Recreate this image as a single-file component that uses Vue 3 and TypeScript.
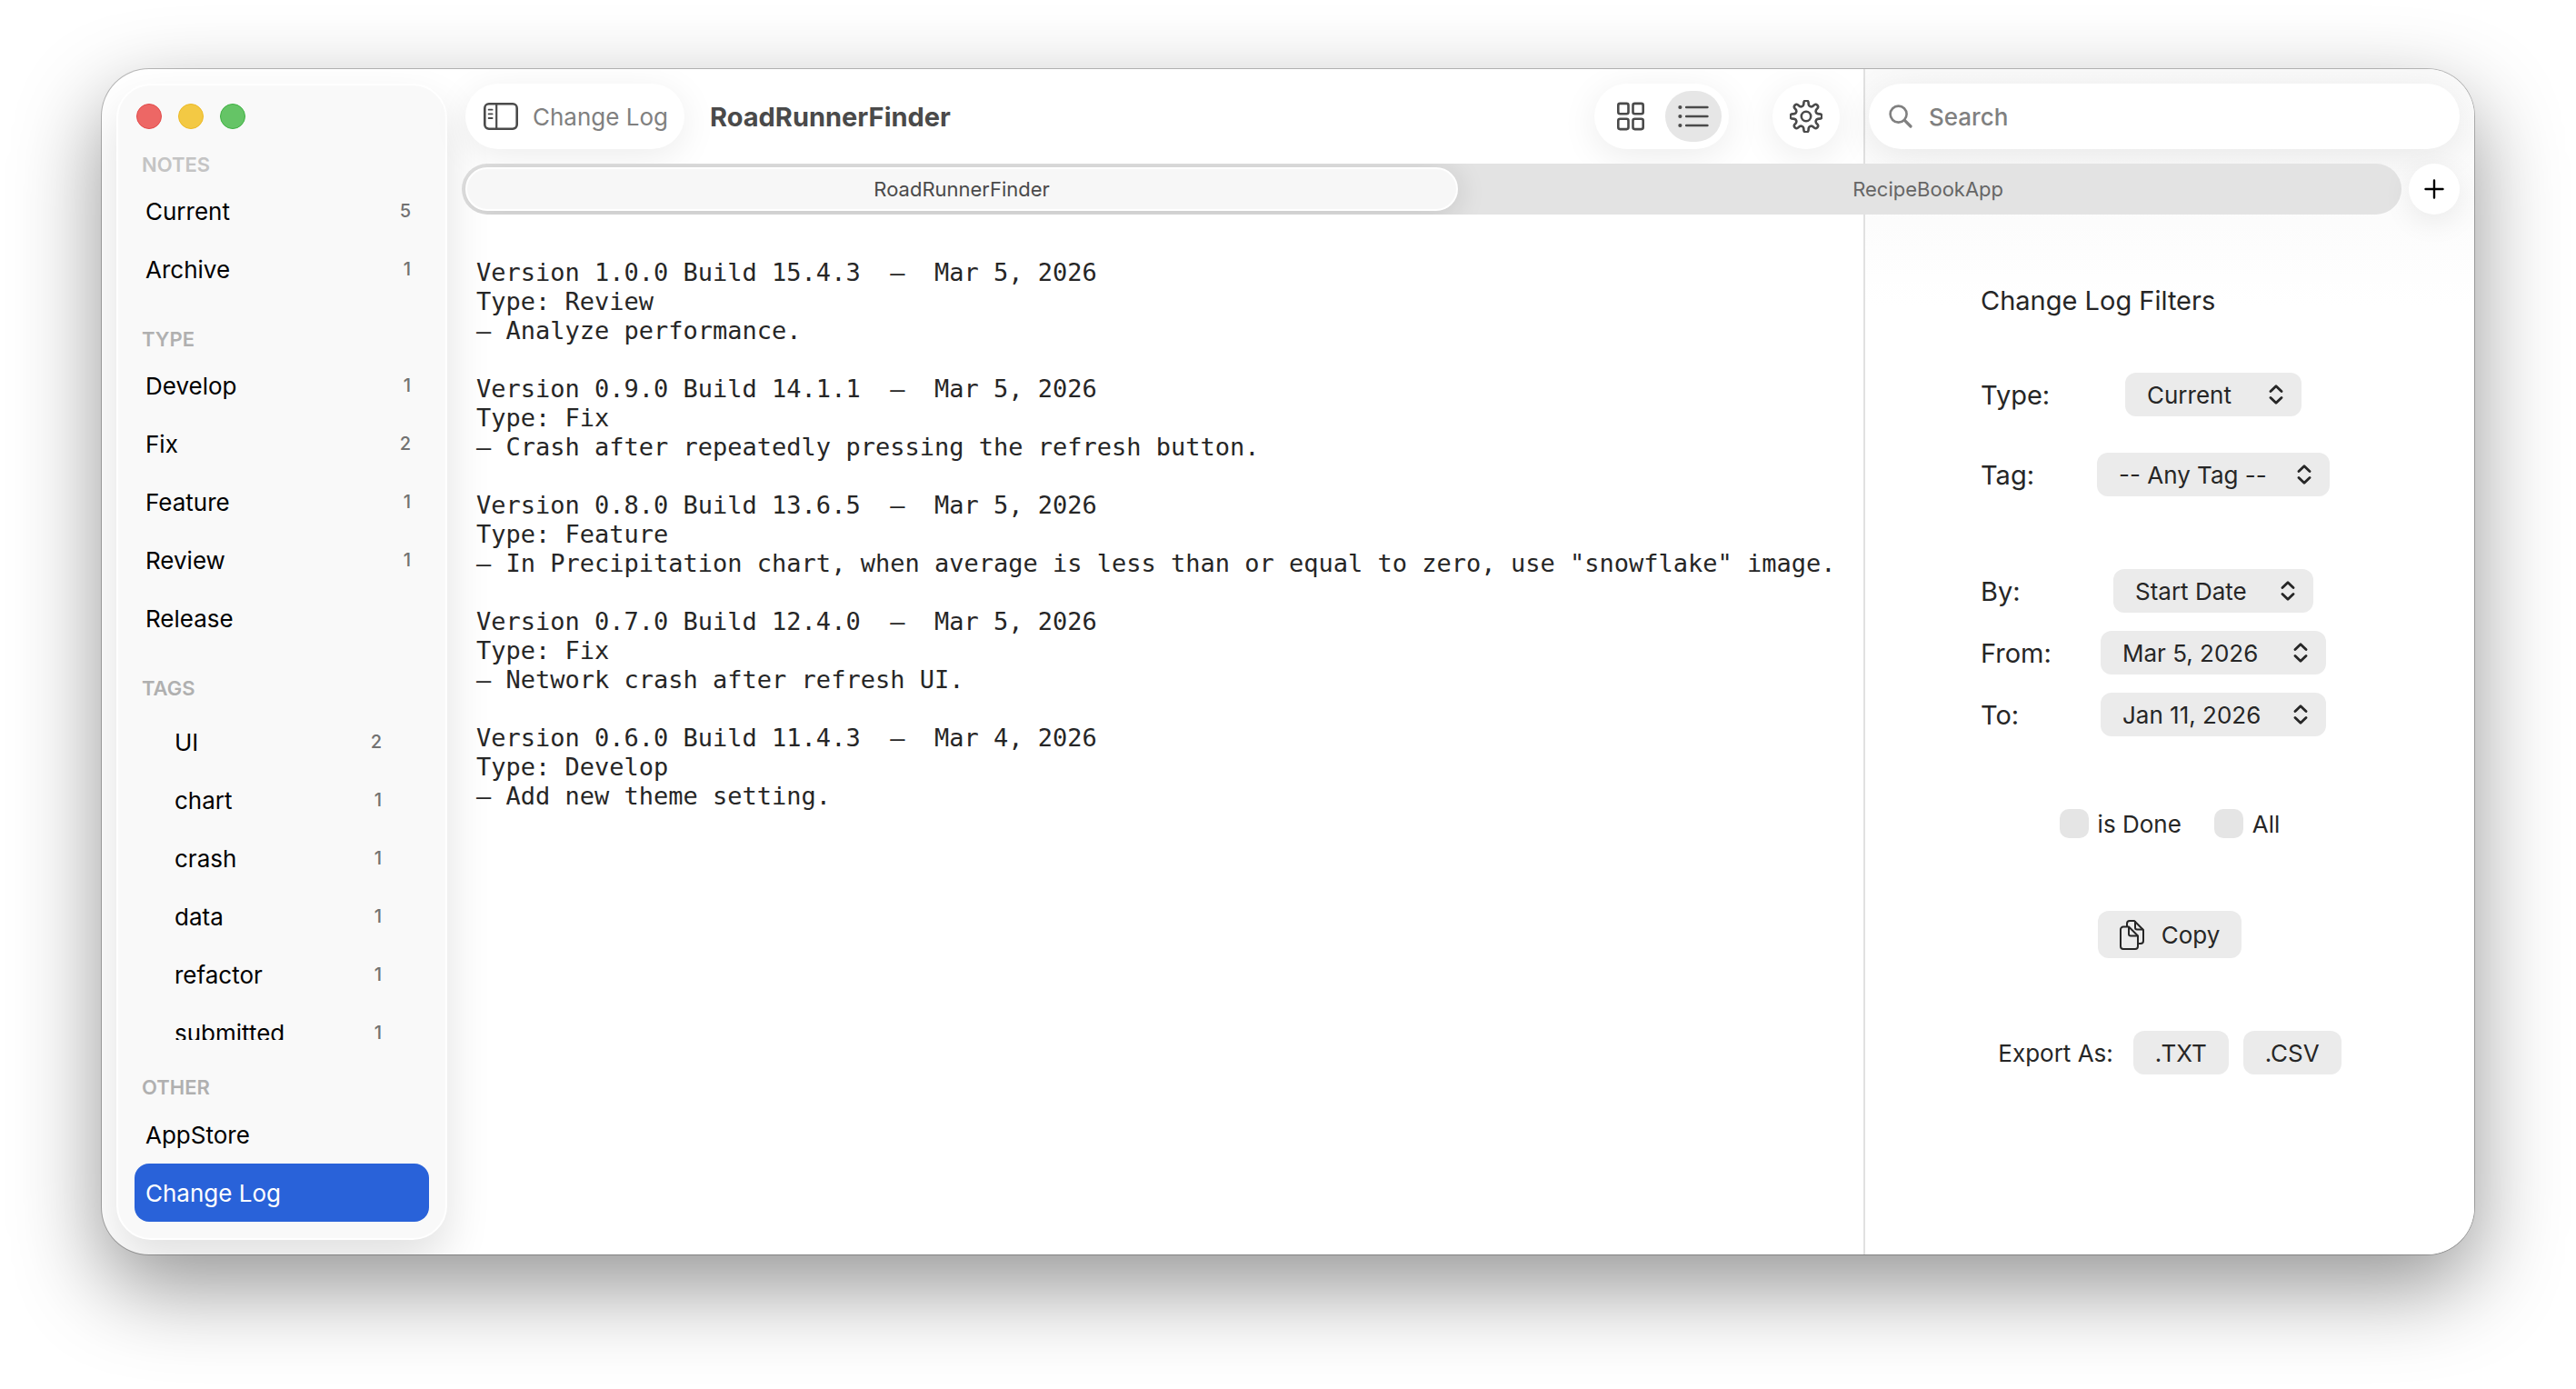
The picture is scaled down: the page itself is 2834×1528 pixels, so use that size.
<script setup lang="ts">
import { ref } from 'vue'

interface NavItem {
  label: string
  count?: number
}

interface LogEntry {
  version: string
  build: string
  date: string
  type: string
  note: string
}

interface Filter {
  id: string
  label: string
  size: string
  options: string[]
}

const notes: NavItem[] = [
  { label: 'Current', count: 5 },
  { label: 'Archive', count: 1 },
]
const types: NavItem[] = [
  { label: 'Develop', count: 1 },
  { label: 'Fix', count: 2 },
  { label: 'Feature', count: 1 },
  { label: 'Review', count: 1 },
  { label: 'Release' },
]
const tags: NavItem[] = [
  { label: 'UI', count: 2 },
  { label: 'chart', count: 1 },
  { label: 'crash', count: 1 },
  { label: 'data', count: 1 },
  { label: 'refactor', count: 1 },
  { label: 'submitted', count: 1 },
]
const others: NavItem[] = [{ label: 'AppStore' }, { label: 'Change Log' }]
const selected = ref('Change Log')

const projects = ['RoadRunnerFinder', 'RecipeBookApp']
const project = ref(projects[0])

const entries: LogEntry[] = [
  { version: '1.0.0', build: '15.4.3', date: 'Mar 5, 2026', type: 'Review', note: 'Analyze performance.' },
  { version: '0.9.0', build: '14.1.1', date: 'Mar 5, 2026', type: 'Fix', note: 'Crash after repeatedly pressing the refresh button.' },
  { version: '0.8.0', build: '13.6.5', date: 'Mar 5, 2026', type: 'Feature', note: 'In Precipitation chart, when average is less than or equal to zero, use "snowflake" image.' },
  { version: '0.7.0', build: '12.4.0', date: 'Mar 5, 2026', type: 'Fix', note: 'Network crash after refresh UI.' },
  { version: '0.6.0', build: '11.4.3', date: 'Mar 4, 2026', type: 'Develop', note: 'Add new theme setting.' },
]

const scope: Filter[] = [
  { id: 'type', label: 'Type:', size: 'small', options: ['Current'] },
  { id: 'tag', label: 'Tag:', size: 'large', options: ['-- Any Tag --'] },
]
const range: Filter[] = [
  { id: 'by', label: 'By:', size: 'medium', options: ['Start Date'] },
  { id: 'from', label: 'From:', size: 'date', options: ['Mar 5, 2026'] },
  { id: 'to', label: 'To:', size: 'date', options: ['Jan 11, 2026'] },
]

// Gear outline: eight rounded teeth around a 36-unit box.
function gearPath(): string {
  const c = 18
  const pts: [number, number][] = []
  for (let i = 0; i < 8; i++) {
    const a = i * 45
    for (const [d, r] of [[-12, 12], [-9, 17.6], [9, 17.6], [12, 12]]) {
      const t = ((a + d - 90) * Math.PI) / 180
      pts.push([c + r * Math.cos(t), c + r * Math.sin(t)])
    }
  }
  const n = pts.length
  const mid = (a: [number, number], b: [number, number]) =>
    `${((a[0] + b[0]) / 2).toFixed(2)} ${((a[1] + b[1]) / 2).toFixed(2)}`
  let d = `M${mid(pts[n - 1], pts[0])}`
  for (let i = 0; i < n; i++) {
    const p = pts[i]
    d += `Q${p[0].toFixed(2)} ${p[1].toFixed(2)} ${mid(p, pts[(i + 1) % n])}`
  }
  return d + 'Z'
}
const gear = gearPath()
</script>

<template>
  <div class="stage">
    <div class="window">
      <aside class="sidebar">
        <div class="lights">
          <button class="light red" type="button" aria-label="Close"></button>
          <button class="light yellow" type="button" aria-label="Minimize"></button>
          <button class="light green" type="button" aria-label="Zoom"></button>
        </div>
        <nav>
          <h2 class="first">NOTES</h2>
          <button v-for="n in notes" :key="n.label" class="row" type="button" @click="selected = n.label">
            <span>{{ n.label }}</span><span class="count">{{ n.count }}</span>
          </button>
          <h2>TYPE</h2>
          <button v-for="n in types" :key="n.label" class="row" type="button" @click="selected = n.label">
            <span>{{ n.label }}</span><span class="count">{{ n.count }}</span>
          </button>
          <h2 class="spaced">TAGS</h2>
          <div class="tags">
            <button v-for="n in tags" :key="n.label" class="row" type="button" @click="selected = n.label">
              <span>{{ n.label }}</span><span class="count">{{ n.count }}</span>
            </button>
          </div>
          <h2 class="other">OTHER</h2>
          <button
            v-for="n in others"
            :key="n.label"
            class="row"
            :class="{ active: selected === n.label }"
            type="button"
            @click="selected = n.label"
          >
            <span>{{ n.label }}</span>
          </button>
        </nav>
      </aside>

      <main class="main">
        <div class="panel-back"></div>

        <header class="toolbar">
          <button class="pill crumb" type="button">
            <svg width="38" height="30" viewBox="0 0 38 30" fill="none" stroke="#4a4a4a" stroke-width="2.6" stroke-linecap="round">
              <rect x="1.3" y="1.3" width="35.4" height="27.4" rx="4.6" />
              <path d="M14.2 1.5V28.5" stroke-width="2.2" />
              <path d="M5.6 7.7h4M5.6 12.4h4M5.6 17h4" stroke-width="1.8" />
            </svg>
            <span>Change Log</span>
          </button>
          <h1>RoadRunnerFinder</h1>
          <div class="pill views">
            <button type="button" aria-label="Grid view">
              <svg width="32" height="32" viewBox="0 0 32 32" fill="none" stroke="#4a4a4a" stroke-width="2.6">
                <rect x="2.3" y="1.9" width="11.2" height="11.4" rx="2" />
                <rect x="18.5" y="1.9" width="11.2" height="11.4" rx="2" />
                <rect x="2.3" y="18.7" width="11.2" height="11.4" rx="2" />
                <rect x="18.5" y="18.7" width="11.2" height="11.4" rx="2" />
              </svg>
            </button>
            <button class="on" type="button" aria-label="List view">
              <svg width="36" height="28" viewBox="0 0 36 28" fill="none" stroke="#4a4a4a" stroke-width="2.6" stroke-linecap="round">
                <path d="M10.2 4H33.4M10.2 14H33.4M10.2 24H33.4" />
                <g fill="#4a4a4a" stroke="none">
                  <circle cx="3.4" cy="4" r="2.1" />
                  <circle cx="3.4" cy="14" r="2.1" />
                  <circle cx="3.4" cy="24" r="2.1" />
                </g>
              </svg>
            </button>
          </div>
          <button class="pill settings" type="button" aria-label="Settings">
            <svg width="36" height="36" viewBox="0 0 36 36" fill="none" stroke="#4a4a4a" stroke-width="2.6" stroke-linejoin="round">
              <path :d="gear" />
              <circle cx="18" cy="18" r="5.2" />
            </svg>
          </button>
        </header>

        <label class="pill search">
          <svg width="26" height="26" viewBox="0 0 26 26" fill="none" stroke="#808080" stroke-width="2.6" stroke-linecap="round">
            <circle cx="10.6" cy="10.6" r="9" />
            <path d="M17.4 17.4L24 24" stroke-width="3.2" />
          </svg>
          <input type="text" placeholder="Search" aria-label="Search" />
        </label>

        <div class="tabbar">
          <div class="tabs">
            <button
              v-for="p in projects"
              :key="p"
              class="tab"
              :class="{ current: p === project }"
              type="button"
              @click="project = p"
            >
              {{ p }}
            </button>
          </div>
          <button class="add" type="button" aria-label="New tab">
            <svg width="22" height="22" viewBox="0 0 22 22" stroke="#000" stroke-width="2.4" stroke-linecap="round">
              <path d="M11 1.5V20.5M1.5 11H20.5" />
            </svg>
          </button>
        </div>

        <section class="log">
          <article v-for="e in entries" :key="e.version">
            <p>Version {{ e.version }} Build {{ e.build }}{{ '  –  ' }}{{ e.date }}</p>
            <p>Type: {{ e.type }}</p>
            <p>– {{ e.note }}</p>
          </article>
        </section>

        <form class="filters" @submit.prevent>
          <h2>Change Log Filters</h2>
          <div class="fields scope">
            <div v-for="f in scope" :key="f.id" class="field">
              <label :for="f.id">{{ f.label }}</label>
              <div class="picker" :class="f.size">
                <select :id="f.id">
                  <option v-for="o in f.options" :key="o">{{ o }}</option>
                </select>
                <svg class="arrows" width="16" height="22" viewBox="0 0 16 22" fill="none" stroke="#262626" stroke-width="2.8" stroke-linecap="round" stroke-linejoin="round">
                  <path d="M2 7.6L8 1.8L14 7.6M2 14.4L8 20.2L14 14.4" />
                </svg>
              </div>
            </div>
          </div>
          <div class="fields range">
            <div v-for="f in range" :key="f.id" class="field">
              <label :for="f.id">{{ f.label }}</label>
              <div class="picker" :class="f.size">
                <select :id="f.id">
                  <option v-for="o in f.options" :key="o">{{ o }}</option>
                </select>
                <svg class="arrows" width="16" height="22" viewBox="0 0 16 22" fill="none" stroke="#262626" stroke-width="2.8" stroke-linecap="round" stroke-linejoin="round">
                  <path d="M2 7.6L8 1.8L14 7.6M2 14.4L8 20.2L14 14.4" />
                </svg>
              </div>
            </div>
          </div>
          <div class="checks">
            <label><input type="checkbox" />is Done</label>
            <label><input type="checkbox" />All</label>
          </div>
          <button class="btn copy" type="button">
            <svg width="28" height="34" viewBox="0 0 28 34" fill="none" stroke="#262626" stroke-width="2" stroke-linejoin="round">
              <path d="M8 8V5a3 3 0 0 1 3-3h5L26 12V24a3 3 0 0 1-3 3H20.500" />
              <path d="M17 2V9.500a2 2 0 0 0 2 2H26" />
              <path d="M4 8.500H10L20 18.500V30a3 3 0 0 1-3 3H4a3 3 0 0 1-3-3V11.500a3 3 0 0 1 3-3Z" />
              <path d="M10 8.500V16.500a2 2 0 0 0 2 2H20" />
            </svg>
            <span>Copy</span>
          </button>
          <div class="export">
            <span>Export As:</span>
            <button class="btn" type="button">.TXT</button>
            <button class="btn" type="button">.CSV</button>
          </div>
        </form>
      </main>
    </div>
  </div>
</template>

<style>
html,
body {
  margin: 0;
  background: #fff;
}
</style>

<style scoped>
.stage {
  box-sizing: border-box;
  min-height: 100vh;
  padding: 76px 112px 148px;
  display: flex;
  font-family: Inter, 'Liberation Sans', sans-serif;
  font-size: 26px;
  color: #262626;
}
button,
input,
select {
  font: inherit;
  color: inherit;
  margin: 0;
  padding: 0;
  border: 0;
  background: none;
  outline: none;
}
h1,
h2,
p {
  margin: 0;
}
svg {
  display: block;
  flex: none;
}
.window {
  flex: 1;
  min-width: 0;
  display: flex;
  overflow: hidden;
  border-radius: 52px;
  background: #fff;
  box-shadow:
    0 0 0 1px rgba(0, 0, 0, 0.24),
    0 36px 96px rgba(0, 0, 0, 0.42);
}

/* Sidebar */
.sidebar {
  box-sizing: border-box;
  flex: none;
  width: 364px;
  margin: 16px;
  padding: 20px 18px 18px;
  border: 2px solid #fff;
  border-radius: 38px;
  background: #f9f9f9;
  box-shadow: 0 24px 50px rgba(0, 0, 0, 0.12);
  color: #000;
}
.lights {
  display: flex;
  gap: 18px;
  padding-left: 2px;
}
.light {
  width: 28px;
  height: 28px;
  border-radius: 50%;
}
.red {
  background: #ed6765;
  border: 1px solid #e24b4a;
}
.yellow {
  background: #f3c944;
  border: 1px solid #ecb926;
}
.green {
  background: #65c466;
  border: 1px solid #3fb143;
}
.sidebar h2 {
  box-sizing: border-box;
  height: 64px;
  padding: 32px 0 0 8px;
  font-size: 22px;
  line-height: 26px;
  font-weight: 600;
  color: #b0b0b0;
}
.sidebar h2.first {
  height: 58px;
  padding-top: 26px;
  color: #c4c4c4;
}
.sidebar h2.spaced {
  height: 72px;
}
.sidebar h2.other {
  height: 72px;
  padding-top: 39px;
}
.row {
  display: flex;
  align-items: center;
  justify-content: space-between;
  width: 100%;
  height: 64px;
  padding: 0 20px 0 12px;
  border-radius: 16px;
  text-align: left;
}
.row.active {
  background: #2962d9;
  color: #fff;
}
.count {
  font-size: 20px;
  font-weight: 500;
  color: #727272;
}
.tags {
  height: 360px;
  overflow: hidden;
  padding: 0 32px;
}

/* Main area */
.main {
  flex: 1;
  min-width: 0;
  display: grid;
  grid-template-columns: 1fr 672px;
  grid-template-rows: 104px 56px 1fr;
}
.panel-back {
  grid-area: 1 / 2 / 4 / 3;
  border-left: 2px solid #e1e1e1;
  background: linear-gradient(#fafafa, #fcfcfc 170px, #fff 260px);
}
.toolbar {
  grid-area: 1 / 1 / 2 / 2;
  display: flex;
  align-items: center;
  padding: 0 26px 0 4px;
}
.pill {
  box-sizing: border-box;
  height: 72px;
  border-radius: 36px;
  background: #fff;
  box-shadow: 0 8px 40px rgba(0, 0, 0, 0.08);
}
.crumb {
  display: flex;
  align-items: center;
  gap: 16px;
  padding: 0 18px 0 20px;
  color: #808080;
}
.toolbar h1 {
  flex: 1;
  padding-left: 28px;
  font-size: 29px;
  font-weight: 700;
  color: #4a4a4a;
}
.views {
  display: flex;
  align-items: center;
  gap: 6px;
  padding: 0 8px;
}
.views button {
  display: flex;
  align-items: center;
  justify-content: center;
  width: 64px;
  height: 56px;
  border-radius: 28px;
}
.views .on {
  width: 62px;
  background: #e6e6e6;
}
.settings {
  display: flex;
  align-items: center;
  justify-content: center;
  width: 74px;
  margin-left: 48px;
}
.search {
  grid-area: 1 / 2 / 2 / 3;
  align-self: center;
  display: flex;
  align-items: center;
  gap: 18px;
  margin: 0 16px 0 6px;
  padding: 0 22px;
}
.search input {
  flex: 1;
  min-width: 0;
}
.search input::placeholder {
  color: #808080;
  font-weight: 500;
  opacity: 1;
}
.tabbar {
  grid-area: 2 / 1 / 3 / 3;
  display: flex;
  gap: 8px;
  padding-right: 16px;
}
.tabs {
  box-sizing: border-box;
  flex: 1;
  display: flex;
  padding: 4px;
  overflow: hidden;
  border-radius: 28px;
  background: #e3e3e3;
}
.tab {
  flex: 19;
  font-size: 22px;
  color: #666;
}
.tab.current {
  box-sizing: border-box;
  flex: 20;
  border: 2px solid #fff;
  border-radius: 24px;
  background: #f7f7f7;
  color: #4a4a4a;
  box-shadow: 0 4px 32px rgba(0, 0, 0, 0.14);
}
.add {
  display: flex;
  align-items: center;
  justify-content: center;
  width: 56px;
  height: 56px;
  border-radius: 50%;
  background: #fff;
  box-shadow: 0 8px 32px rgba(0, 0, 0, 0.08);
}

/* Change log text */
.log {
  grid-area: 3 / 1 / 4 / 2;
  display: flex;
  flex-direction: column;
  gap: 32px;
  padding: 48px 16px 0;
  font-family: 'DejaVu Sans Mono', 'Liberation Mono', monospace;
  font-size: 27px;
  line-height: 32px;
}
.log p {
  white-space: pre-wrap;
}

/* Filters */
.filters {
  grid-area: 3 / 2 / 4 / 3;
  display: flex;
  flex-direction: column;
  align-items: center;
  padding: 76px 0 0 2px;
}
.filters h2,
.fields {
  width: 416px;
}
.filters h2 {
  font-size: 29px;
  line-height: 38px;
  font-weight: 400;
}
.fields {
  display: flex;
  flex-direction: column;
}
.scope {
  gap: 40px;
  margin-top: 60px;
}
.range {
  gap: 20px;
  margin-top: 80px;
}
.field {
  display: grid;
  grid-template-columns: 96px 1fr;
  align-items: center;
}
.field label {
  font-size: 29px;
}
.picker {
  justify-self: center;
  display: grid;
  align-items: center;
}
.picker select {
  grid-area: 1 / 1 / 2 / 2;
  box-sizing: border-box;
  width: 100%;
  height: 48px;
  padding: 0 48px 0 24px;
  border-radius: 12px;
  background: #ebebeb;
  appearance: none;
}
.arrows {
  grid-area: 1 / 1 / 2 / 2;
  justify-self: end;
  margin-right: 20px;
  pointer-events: none;
}
.small {
  width: 194px;
}
.medium {
  width: 220px;
}
.large {
  width: 256px;
}
.date {
  width: 248px;
}
.checks {
  display: flex;
  gap: 36px;
  margin-top: 80px;
}
.checks label {
  display: flex;
  align-items: center;
  gap: 10px;
}
.checks input {
  appearance: none;
  width: 32px;
  height: 32px;
  border-radius: 10px;
  background: #e5e5e5;
}
.btn {
  height: 48px;
  padding: 0 24px;
  border-radius: 12px;
  background: #ebebeb;
}
.copy {
  display: flex;
  align-items: center;
  gap: 18px;
  height: 52px;
  margin-top: 80px;
}
.export {
  display: flex;
  align-items: center;
  gap: 16px;
  margin-top: 80px;
}
.export span {
  margin-right: 6px;
}
</style>
